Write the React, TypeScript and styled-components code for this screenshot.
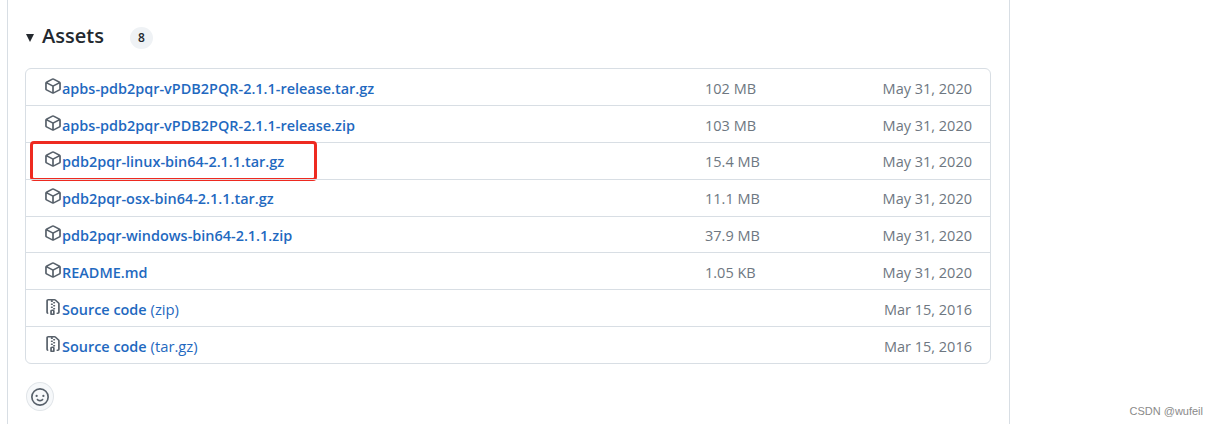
import React, { FC } from 'react'
import styled, { createGlobalStyle } from 'styled-components'

const GlobalStyle = createGlobalStyle`
    html, body {
        margin: 0;
        padding: 0;
        background: #ffffff;
    }
    body {
        font-family: "Open Sans", "Noto Sans", "Liberation Sans", sans-serif;
        overflow: hidden;
    }
`

const Page = styled.div`
    position: relative;
    width: 1218px;
    height: 425px;
    overflow: hidden;
`
const Release = styled.div`
    box-sizing: border-box;
    margin-left: 7px;
    width: 1003px;
    height: 424px;
    border-left: 1px solid #d8dee4;
    border-right: 1px solid #d8dee4;
    padding: 19px 18px 0 17px;
`
const Summary = styled.div`
    display: flex;
    align-items: center;
    height: 34px;
    color: #24292f;
`
const Caret = styled.span`
    width: 0;
    height: 0;
    border-left: 4.5px solid transparent;
    border-right: 4.5px solid transparent;
    border-top: 8px solid #24292f;
    margin: 3px 8px 0 1px;
`
const Title = styled.span`
    font-size: 20px;
    line-height: 34px;
    font-weight: 600;
`
const Counter = styled.span`
    display: inline-flex;
    align-items: center;
    justify-content: center;
    width: 23px;
    height: 22px;
    margin: 3px 0 0 26px;
    border-radius: 50%;
    background: #eff2f5;
    font-size: 12px;
    font-weight: 600;
`
const List = styled.ul`
    list-style: none;
    margin: 15px 0 0;
    padding: 0;
    border: 1px solid #d8dee4;
    border-radius: 6px;
`
const Row = styled.li`
    position: relative;
    box-sizing: border-box;
    display: flex;
    align-items: center;
    height: 36.9px;
    padding: 2.4px 18px 0 18px;
    border-top: 1px solid #d8dee4;
    &:first-child {
        border-top: none;
        height: 35.9px;
    }
`
const Name = styled.div`
    display: flex;
    align-items: center;
    flex: 1;
    min-width: 0;
`
const Link = styled.a`
    color: #1f69c0;
    font-size: 14.45px;
    font-weight: 600;
    white-space: nowrap;
`
const Format = styled.span`
    font-size: 14.8px;
    font-weight: 400;
`
const IconBox = styled.svg`
    display: block;
    flex: none;
    width: 18px;
    height: 16px;
    margin-top: -5px;
    fill: #57606a;
`
const Size = styled.span`
    width: 130px;
    font-size: 14.5px;
    color: #6e7781;
`
const Date = styled.span`
    width: 137px;
    text-align: right;
    font-size: 14.5px;
    color: #6e7781;
`
const Highlight = styled.div`
    position: absolute;
    left: 4px;
    top: -2px;
    width: 287px;
    height: 40px;
    box-sizing: border-box;
    border: 3px solid #ee2a20;
    border-radius: 4px;
`
const Reaction = styled.button`
    display: flex;
    align-items: center;
    justify-content: center;
    width: 28px;
    height: 29px;
    margin: 18px 0 0 1px;
    padding: 0;
    border: 1px solid #e1e5e9;
    border-radius: 50%;
    background: #f6f8fa;
    svg {
        width: 18px;
        height: 18px;
        fill: #57606a;
    }
`
const Watermark = styled.span`
    position: absolute;
    right: 15px;
    bottom: 8px;
    font-family: "Liberation Sans", sans-serif;
    font-size: 11px;
    color: #8a8a8a;
`

const PackageIcon: FC = () => (
    <IconBox viewBox="0 0 16 16" preserveAspectRatio="none">
        <path d="m8.878.392 5.25 3.045c.54.314.872.89.872 1.514v6.098a1.75 1.75 0 0 1-.872 1.514l-5.25 3.045a1.75 1.75 0 0 1-1.756 0l-5.25-3.045A1.75 1.75 0 0 1 1 11.049V4.951c0-.624.332-1.201.872-1.514L7.122.392a1.75 1.75 0 0 1 1.756 0ZM7.875 1.69l-4.63 2.685L8 7.133l4.755-2.758-4.63-2.685a.248.248 0 0 0-.25 0ZM2.5 5.677v5.372c0 .09.047.171.125.216l4.625 2.683V8.432Zm6.25 8.271 4.625-2.683a.25.25 0 0 0 .125-.216V5.677L8.75 8.432Z" />
    </IconBox>
)

const ZipIcon: FC = () => (
    <IconBox viewBox="0 0 16 16" preserveAspectRatio="none">
        <path d="M3.5 1.75v11.5c0 .09.048.173.126.217a.75.75 0 0 1-.752 1.298A1.748 1.748 0 0 1 2 13.25V1.75C2 .784 2.784 0 3.75 0h5.586c.464 0 .909.185 1.237.513l2.914 2.914c.329.328.513.773.513 1.237v8.586A1.75 1.75 0 0 1 12.25 15h-.5a.75.75 0 0 1 0-1.5h.5a.25.25 0 0 0 .25-.25V4.664a.25.25 0 0 0-.073-.177L9.513 1.573a.25.25 0 0 0-.177-.073H7.25a.75.75 0 0 1 0 1.5h-.5a.75.75 0 0 1 0-1.5h-3a.25.25 0 0 0-.25.25Zm3.75 8.75h.5c.966 0 1.75.784 1.75 1.75v3a.75.75 0 0 1-.75.75h-2.5a.75.75 0 0 1-.75-.75v-3c0-.966.784-1.75 1.75-1.75ZM6 5.25a.75.75 0 0 1 .75-.75h.5a.75.75 0 0 1 0 1.5h-.5A.75.75 0 0 1 6 5.25Zm.75 2.25h.5a.75.75 0 0 1 0 1.5h-.5a.75.75 0 0 1 0-1.5ZM8 6.75A.75.75 0 0 1 8.75 6h.5a.75.75 0 0 1 0 1.5h-.5A.75.75 0 0 1 8 6.75ZM8.75 3h.5a.75.75 0 0 1 0 1.5h-.5a.75.75 0 0 1 0-1.5ZM8 9.75A.75.75 0 0 1 8.75 9h.5a.75.75 0 0 1 0 1.5h-.5A.75.75 0 0 1 8 9.75Zm-1 2.5v2.25h1v-2.25a.25.25 0 0 0-.25-.25h-.5a.25.25 0 0 0-.25.25Z" />
    </IconBox>
)

const SmileyIcon: FC = () => (
    <svg viewBox="0 0 16 16">
        <path d="M8 0a8 8 0 1 1 0 16A8 8 0 0 1 8 0ZM1.5 8a6.5 6.5 0 1 0 13 0 6.5 6.5 0 0 0-13 0Zm3.82 1.636a.75.75 0 0 1 1.038.175l.007.009c.103.118.22.222.35.31.264.178.683.37 1.285.37.602 0 1.02-.192 1.285-.371.13-.088.247-.192.35-.31l.007-.008a.75.75 0 0 1 1.222.87l-.022-.015c.02.013.021.015.021.015v.001l-.001.002-.002.003-.005.007-.014.019a2.066 2.066 0 0 1-.184.213c-.16.166-.338.316-.53.445-.63.418-1.37.638-2.127.629-.946 0-1.652-.308-2.126-.63a3.331 3.331 0 0 1-.715-.657l-.014-.02-.005-.006-.002-.003v-.002h-.001l.613-.432-.614.43a.75.75 0 0 1 .183-1.044ZM12 7a1 1 0 1 1-2 0 1 1 0 0 1 2 0ZM5 8a1 1 0 1 1 0-2 1 1 0 0 1 0 2Z" />
    </svg>
)

interface Asset {
    name: string
    format?: string
    size?: string
    date: string
    marked?: boolean
}

const assets: Asset[] = [
    { name: 'apbs-pdb2pqr-vPDB2PQR-2.1.1-release.tar.gz', size: '102 MB', date: 'May 31, 2020' },
    { name: 'apbs-pdb2pqr-vPDB2PQR-2.1.1-release.zip', size: '103 MB', date: 'May 31, 2020' },
    { name: 'pdb2pqr-linux-bin64-2.1.1.tar.gz', size: '15.4 MB', date: 'May 31, 2020', marked: true },
    { name: 'pdb2pqr-osx-bin64-2.1.1.tar.gz', size: '11.1 MB', date: 'May 31, 2020' },
    { name: 'pdb2pqr-windows-bin64-2.1.1.zip', size: '37.9 MB', date: 'May 31, 2020' },
    { name: 'README.md', size: '1.05 KB', date: 'May 31, 2020' },
    { name: 'Source code', format: '(zip)', date: 'Mar 15, 2016' },
    { name: 'Source code', format: '(tar.gz)', date: 'Mar 15, 2016' },
]

const App: FC = () => (
    <Page>
        <GlobalStyle />
        <Release>
            <Summary>
                <Caret />
                <Title>Assets</Title>
                <Counter>8</Counter>
            </Summary>
            <List>
                {assets.map((asset) => (
                    <Row key={asset.name + asset.format}>
                        <Name>
                            {asset.format ? <ZipIcon /> : <PackageIcon />}
                            <Link>
                                {asset.name}
                                {asset.format && <Format> {asset.format}</Format>}
                            </Link>
                        </Name>
                        <Size>{asset.size}</Size>
                        <Date>{asset.date}</Date>
                        {asset.marked && <Highlight />}
                    </Row>
                ))}
            </List>
            <Reaction>
                <SmileyIcon />
            </Reaction>
        </Release>
        <Watermark>CSDN @wufeil</Watermark>
    </Page>
)

export default App
